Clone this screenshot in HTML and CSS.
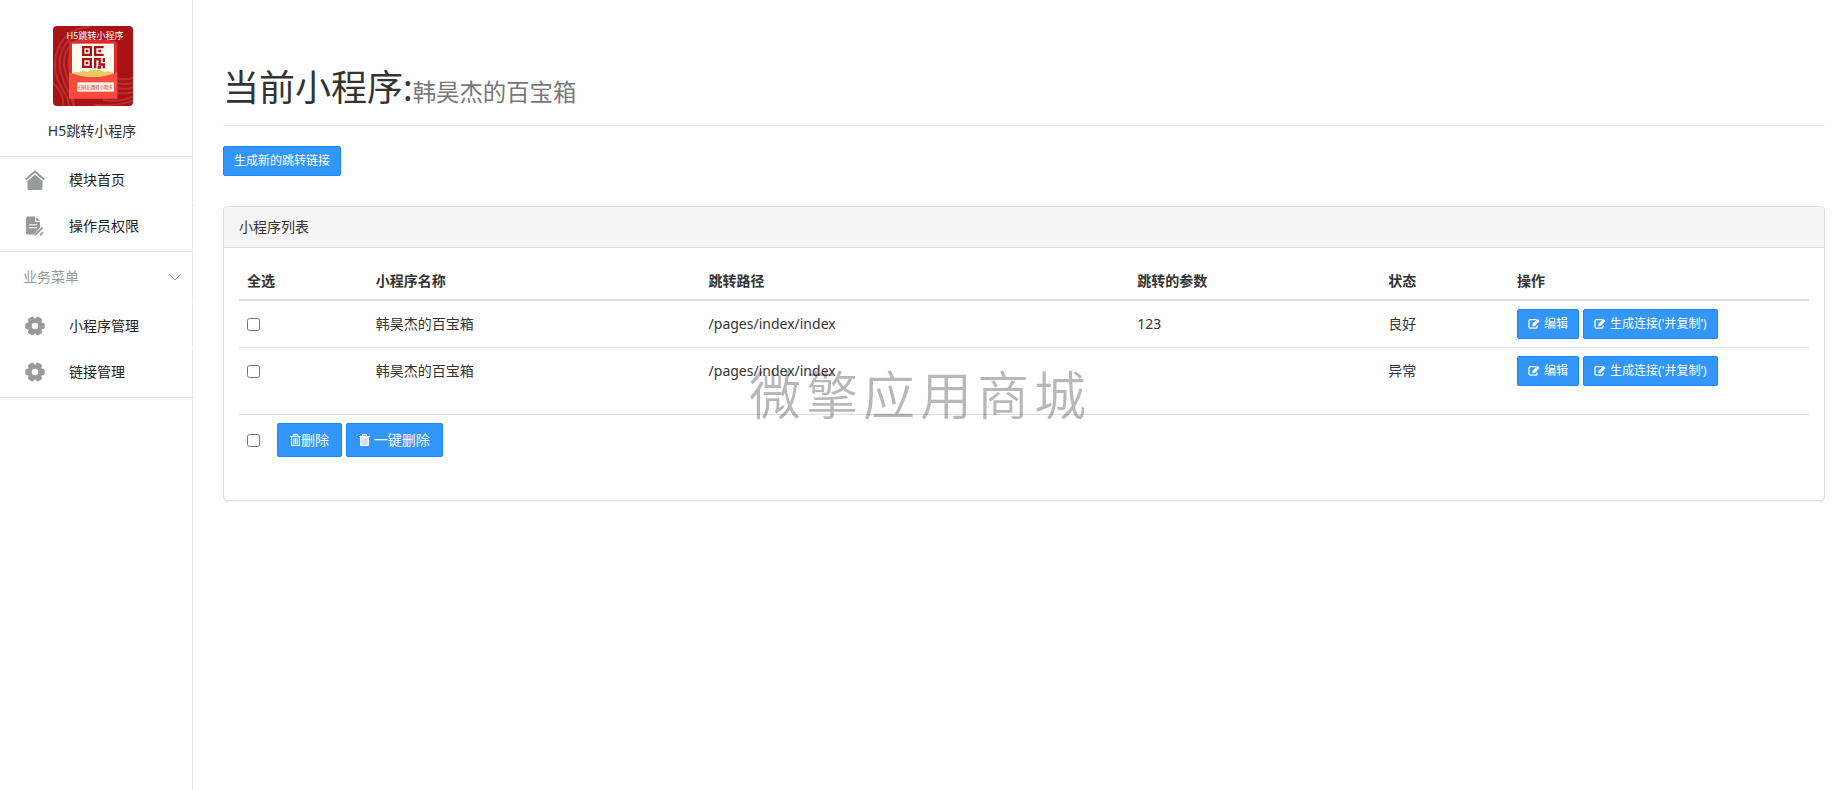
FILE: index.html
```html
<!DOCTYPE html>
<html lang="zh-CN">
<head>
    <meta charset="UTF-8">
    <meta name="viewport" content="width=device-width, initial-scale=1.0">
    <title>H5跳转小程序</title>
    <link rel="stylesheet" href="styles.css">
</head>
<body>
    <svg class="symbols" aria-hidden="true">
        <symbol id="icon-edit" viewBox="0 0 12 12">
            <path d="M8.500 1.700H2.300Q1 1.700 1 3v5.800Q1 10.100 2.300 10.100h5.500Q9.100 10.100 9.100 8.800V7.500" fill="none" stroke="currentColor" stroke-width="1.300"/>
            <path d="M4.300 8.300V6L9.500.9 11.700 3 6.500 8.300z" fill="currentColor"/>
        </symbol>
        <symbol id="icon-gear" viewBox="0 0 20 20">
            <circle cx="10" cy="10" r="7.600" fill="currentColor"/>
            <g fill="currentColor">
                <rect x="0.300" y="6.700" width="19.400" height="6.600" rx="2"/>
                <rect x="0.300" y="6.700" width="19.400" height="6.600" rx="2" transform="rotate(60 10 10)"/>
                <rect x="0.300" y="6.700" width="19.400" height="6.600" rx="2" transform="rotate(120 10 10)"/>
            </g>
            <circle cx="10" cy="10" r="3.300" fill="#fff"/>
        </symbol>
    </svg>

    <div class="wrap">
        <aside class="sidebar">
            <div class="module">
                <svg class="logo" viewBox="0 0 240 240" aria-hidden="true">
                    <rect width="240" height="240" fill="#a81415"/>
                    <g fill="none" stroke="#b83030" stroke-width="6">
                        <path d="M110 3C40 5 5 60 6 120s40 75 42 120"/>
                        <path d="M110 17C45 22 18 70 20 118s30 70 42 122"/>
                        <path d="M100 32C50 45 31 80 33 115s25 60 30 125"/>
                        <path d="M90 50C55 65 44 90 46 115s12 50 15 80"/>
                        <path d="M0 170q35 35 30 70"/>
                        <path d="M190 158q30 5 50-2M190 172q30 5 50-2M190 186q30 5 50-2M190 200q30 5 50-2M150 222q50 8 90-10M120 236q70 6 120-12"/>
                    </g>
                    <path d="M48 48q72-20 145 0v100H48z" fill="#dd2c2d"/>
                    <rect x="57" y="53" width="126" height="100" fill="#fffaf0"/>
                    <path d="M57 146q8-12 20-7 12-9 26-1 10-8 28-6 16-1 22 7 16-8 30 6v10H57z" fill="#e6cb5c"/>
                    <path d="M48 138q72 32 145 0v80H48z" fill="#fb4a3e"/>
                    <rect x="72" y="169" width="111" height="28" fill="#fff3e8"/>
                    <g fill="none" stroke="#a81415" stroke-width="7">
                        <path d="M90.500 63.500h23v23h-23zM90.500 99.500h23v23h-23zM152 63.500h-25.500v23H152M126.500 127V99.500H140v16h12.500V127M152.500 96v12"/>
                    </g>
                    <path d="M98 71h8v8h-8zM98 107h8v8h-8zM136 71h8v8h-8zM134 120h10v8h-10z" fill="#a81415"/>
                    <text x="126" y="38" class="logo-title">H5跳转小程序</text>
                    <text x="127" y="188" class="logo-label">扫码后跳转小程序</text>
                </svg>
                <div class="module-name">H5跳转小程序</div>
            </div>
            <nav class="menu">
                <a class="menu-item" href="#">
                    <svg class="menu-icon" viewBox="0 0 20 20" aria-hidden="true">
                        <path d="M.8 9.500 10 1.500l9.200 8" fill="none" stroke="currentColor" stroke-width="2"/>
                        <path d="M10 4.500 17.500 11V18.500Q17.500 20 16 20H4Q2.500 20 2.500 18.500V11z" fill="currentColor"/>
                    </svg>
                    模块首页
                </a>
                <a class="menu-item" href="#">
                    <svg class="menu-icon" viewBox="0 0 20 20" aria-hidden="true">
                        <path d="M2.500.5H10v5.500h5v5.500L9 18.500H2.500Q1 18.500 1 17V2Q1 .5 2.500.5zM11.300.8 15 4.700h-3.700z" fill="currentColor"/>
                        <path d="M4 8.700h8M4 11.700h8" stroke="#fff" stroke-width="1.100"/>
                        <path d="M10 19.200l7.500-7.700M15 19.300l3-3" stroke="currentColor" stroke-width="1.800"/>
                    </svg>
                    操作员权限
                </a>
            </nav>
            <nav class="menu">
                <div class="menu-title">
                    业务菜单
                    <svg class="arrow" viewBox="0 0 14 8" aria-hidden="true"><path d="M1 1l6 6 6-6" fill="none" stroke="currentColor"/></svg>
                </div>
                <a class="menu-item" href="#">
                    <svg class="menu-icon" aria-hidden="true"><use href="#icon-gear"/></svg>
                    小程序管理
                </a>
                <a class="menu-item" href="#">
                    <svg class="menu-icon" aria-hidden="true"><use href="#icon-gear"/></svg>
                    链接管理
                </a>
            </nav>
        </aside>

        <main class="content">
            <div class="page-header">
                <h1>当前小程序:<small>韩昊杰的百宝箱</small></h1>
            </div>
            <button type="button" class="btn btn-sm">生成新的跳转链接</button>

            <div class="panel">
                <div class="panel-heading">小程序列表</div>
                <div class="panel-body">
                    <table class="table">
                        <colgroup>
                            <col class="col-check">
                            <col class="col-name">
                            <col class="col-path">
                            <col class="col-param">
                            <col class="col-state">
                            <col>
                        </colgroup>
                        <thead>
                            <tr>
                                <th>全选</th>
                                <th>小程序名称</th>
                                <th>跳转路径</th>
                                <th>跳转的参数</th>
                                <th>状态</th>
                                <th>操作</th>
                            </tr>
                        </thead>
                        <tbody>
                            <tr>
                                <td><input type="checkbox" aria-label="选择第1行"></td>
                                <td>韩昊杰的百宝箱</td>
                                <td>/pages/index/index</td>
                                <td>123</td>
                                <td>良好</td>
                                <td>
                                    <div class="actions">
                                        <button type="button" class="btn btn-sm"><svg class="icon-edit" aria-hidden="true"><use href="#icon-edit"/></svg>编辑</button>
                                        <button type="button" class="btn btn-sm"><svg class="icon-edit" aria-hidden="true"><use href="#icon-edit"/></svg>生成连接('并复制')</button>
                                    </div>
                                </td>
                            </tr>
                            <tr class="last">
                                <td><input type="checkbox" aria-label="选择第2行"></td>
                                <td>韩昊杰的百宝箱</td>
                                <td>/pages/index/index</td>
                                <td></td>
                                <td>异常</td>
                                <td>
                                    <div class="actions">
                                        <button type="button" class="btn btn-sm"><svg class="icon-edit" aria-hidden="true"><use href="#icon-edit"/></svg>编辑</button>
                                        <button type="button" class="btn btn-sm"><svg class="icon-edit" aria-hidden="true"><use href="#icon-edit"/></svg>生成连接('并复制')</button>
                                    </div>
                                </td>
                            </tr>
                        </tbody>
                        <tfoot>
                            <tr>
                                <td colspan="6">
                                    <div class="actions">
                                        <input type="checkbox" class="check-all" aria-label="全选">
                                        <button type="button" class="btn"><svg class="icon-trash" viewBox="0 0 11 12" aria-hidden="true">
                                            <path d="M3.500 2V.6h4V2M0 2.500h11M1.600 3v8.400h7.800V3M3.800 4v6M5.500 4v6M7.200 4v6" fill="none" stroke="currentColor" stroke-width="1.100"/>
                                        </svg>删除</button>
                                        <button type="button" class="btn"><svg class="icon-trash" viewBox="0 0 11 12" aria-hidden="true">
                                            <path d="M3.500 2V.6h4V2M0 2.500h11" fill="none" stroke="currentColor" stroke-width="1.200"/>
                                            <path d="M1.500 3h8v8.500h-8z" fill="#d6e2fb" stroke="currentColor"/>
                                        </svg>&nbsp;一键删除</button>
                                    </div>
                                </td>
                            </tr>
                        </tfoot>
                    </table>
                </div>
            </div>
        </main>
    </div>

    <div class="watermark">微擎应用商城</div>
</body>
</html>
```
FILE: styles.css
```css
*{
    box-sizing: border-box;
}

body{
    margin: 0;
    font-family: "Noto Sans", "Noto Sans CJK SC", sans-serif;
    font-size: 14px;
    line-height: 20px;
    color: #333;
    background: #fff;
}

.symbols{
    display: none;
}

.wrap{
    display: flex;
    min-height: 100vh;
}

/* sidebar */
.sidebar{
    flex: none;
    width: 193px;
    border-right: 1px solid #e7e7eb;
}

.module{
    padding: 26px 0 15px;
    text-align: center;
    border-bottom: 1px solid #e7e7eb;
}

.logo{
    display: block;
    width: 80px;
    height: 80px;
    margin: 0 auto 15px 53px;
    border-radius: 4px;
}

.logo-title{
    font-size: 27px;
    fill: #fff;
    text-anchor: middle;
}

.logo-label{
    font-size: 13px;
    fill: #c0302a;
    text-anchor: middle;
}

.module-name{
    margin-left: -8px;
}

.menu{
    padding-bottom: 2px;
    border-bottom: 1px solid #e7e7eb;
}

.menu-item{
    display: flex;
    align-items: center;
    height: 46px;
    margin-right: -1px;
    padding-left: 25px;
    border-bottom: 1px solid #fff;
    color: #222;
    text-decoration: none;
}

.menu-icon{
    width: 20px;
    height: 20px;
    margin-right: 24px;
    color: #98999a;
}

.menu-title{
    display: flex;
    align-items: center;
    justify-content: space-between;
    height: 51px;
    margin-right: -1px;
    padding: 0 11px 0 23px;
    border-bottom: 1px solid #fff;
    color: #999;
}

.arrow{
    width: 14px;
    height: 8px;
}

/* content */
.content{
    flex: 1;
    min-width: 0;
    padding: 68px 10px 20px 30px;
}

.page-header{
    padding-bottom: 13px;
    margin-bottom: 20px;
    border-bottom: 1px solid #eee;
}

.page-header h1{
    margin: 0;
    font-size: 36px;
    font-weight: 400;
    line-height: 40px;
}

.page-header small{
    font-size: 65%;
    color: #777;
}

.btn{
    display: inline-flex;
    align-items: center;
    height: 34px;
    padding: 0 12px;
    border: 1px solid #1a87fa;
    border-radius: 2px;
    background: #3296fa;
    color: #fff;
    font-family: inherit;
    font-size: 14px;
    line-height: 20px;
    white-space: nowrap;
    cursor: pointer;
}

.btn-sm{
    height: 30px;
    padding: 0 10px;
    font-size: 12px;
    line-height: 18px;
}

.icon-edit{
    width: 12px;
    height: 12px;
    margin-right: 4px;
}

.icon-trash{
    width: 11px;
    height: 12px;
}

.panel{
    margin-top: 30px;
    border: 1px solid #ddd;
    border-radius: 4px;
    box-shadow: 0 1px 1px rgba(0,0,0,.05);
}

.panel-heading{
    padding: 10px 15px;
    border-bottom: 1px solid #ddd;
    border-radius: 3px 3px 0 0;
    background: #f5f5f5;
}

.panel-body{
    padding: 15px;
}

.table{
    width: 100%;
    margin-bottom: 20px;
    table-layout: fixed;
    border-spacing: 0;
}

.col-check,
.col-state{
    width: 8.2%;
}

.col-name{
    width: 21.2%;
}

.col-path{
    width: 27.3%;
}

.col-param{
    width: 16%;
}

.table th{
    padding: 8px;
    border-bottom: 2px solid #ddd;
    text-align: left;
}

.table td{
    padding: 8px;
    vertical-align: middle;
}

.table tbody tr + tr td,
.table tfoot td{
    border-top: 1px solid #ddd;
}

.table .last td{
    padding-bottom: 28px;
}

.table input{
    display: block;
    width: 13px;
    height: 13px;
    margin: 0;
}

.actions{
    display: flex;
    align-items: center;
    gap: 4px;
}

.table .check-all{
    margin-right: 13px;
}

/* watermark over the page centre */
.watermark{
    position: fixed;
    inset: 0;
    display: flex;
    align-items: center;
    justify-content: center;
    padding-left: 5px;
    font-size: 52px;
    font-weight: 350;
    line-height: 60px;
    letter-spacing: 5px;
    white-space: nowrap;
    color: rgba(0,0,0,.28);
    pointer-events: none;
}
```
